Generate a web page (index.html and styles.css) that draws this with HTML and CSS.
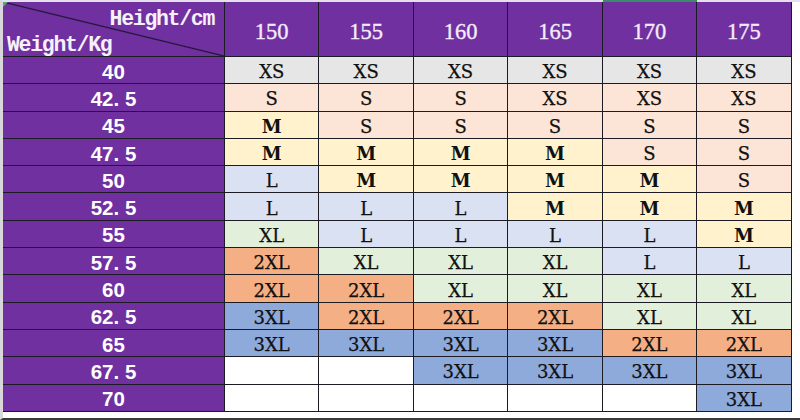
FILE: index.html
```html
<!DOCTYPE html>
<html lang="en">
<head>
<meta charset="utf-8">
<title>Size chart</title>
<link rel="stylesheet" href="styles.css">
</head>
<body>
<div class="sheet">
  <div class="sel-mark"></div>
  <div class="grid">
    <div class="corner">
      <span class="corner-h">Height/cm</span>
      <span class="corner-w">Weight/Kg</span>
      <span class="corner-tick"></span>
    </div>
    <div class="hd">150</div><div class="hd">155</div><div class="hd">160</div><div class="hd">165</div><div class="hd">170</div><div class="hd">175</div>

    <div class="wt">40</div>
    <div class="c xs">XS</div><div class="c xs">XS</div><div class="c xs">XS</div><div class="c xs">XS</div><div class="c xs">XS</div><div class="c xs">XS</div>

    <div class="wt">42<span class="pt">.</span>5</div>
    <div class="c s">S</div><div class="c s">S</div><div class="c s">S</div><div class="c s">XS</div><div class="c s">XS</div><div class="c s">XS</div>

    <div class="wt">45</div>
    <div class="c m">M</div><div class="c s">S</div><div class="c s">S</div><div class="c s">S</div><div class="c s">S</div><div class="c s">S</div>

    <div class="wt">47<span class="pt">.</span>5</div>
    <div class="c m">M</div><div class="c m">M</div><div class="c m">M</div><div class="c m">M</div><div class="c s">S</div><div class="c s">S</div>

    <div class="wt">50</div>
    <div class="c l">L</div><div class="c m">M</div><div class="c m">M</div><div class="c m">M</div><div class="c m">M</div><div class="c s">S</div>

    <div class="wt">52<span class="pt">.</span>5</div>
    <div class="c l">L</div><div class="c l">L</div><div class="c l">L</div><div class="c m">M</div><div class="c m">M</div><div class="c m">M</div>

    <div class="wt">55</div>
    <div class="c xl">XL</div><div class="c l">L</div><div class="c l">L</div><div class="c l">L</div><div class="c l">L</div><div class="c m">M</div>

    <div class="wt">57<span class="pt">.</span>5</div>
    <div class="c x2">2XL</div><div class="c xl">XL</div><div class="c xl">XL</div><div class="c xl">XL</div><div class="c l">L</div><div class="c l">L</div>

    <div class="wt">60</div>
    <div class="c x2">2XL</div><div class="c x2">2XL</div><div class="c xl">XL</div><div class="c xl">XL</div><div class="c xl">XL</div><div class="c xl">XL</div>

    <div class="wt">62<span class="pt">.</span>5</div>
    <div class="c x3">3XL</div><div class="c x2">2XL</div><div class="c x2">2XL</div><div class="c x2">2XL</div><div class="c xl">XL</div><div class="c xl">XL</div>

    <div class="wt">65</div>
    <div class="c x3">3XL</div><div class="c x3">3XL</div><div class="c x3">3XL</div><div class="c x3">3XL</div><div class="c x2">2XL</div><div class="c x2">2XL</div>

    <div class="wt">67<span class="pt">.</span>5</div>
    <div class="c e"></div><div class="c e"></div><div class="c x3">3XL</div><div class="c x3">3XL</div><div class="c x3">3XL</div><div class="c x3">3XL</div>

    <div class="wt">70</div>
    <div class="c e"></div><div class="c e"></div><div class="c e"></div><div class="c e"></div><div class="c e"></div><div class="c x3">3XL</div>
  </div>
</div>
</body>
</html>
```

FILE: styles.css
```css
html, body {
  margin: 0;
  padding: 0;
  background: #ffffff;
}

.sheet {
  position: relative;
  width: 800px;
  height: 420px;
  box-sizing: border-box;
  border-top: 2px solid #e6e0ee;
  border-left: 3px solid #d9d6dc;
  border-bottom: 2px solid #3a3a3a;
  background: #ffffff;
}

.sel-mark {
  position: absolute;
  top: -2px;
  left: 600px;
  width: 94px;
  height: 2px;
  background: #3b8a6c;
}

.grid {
  display: grid;
  grid-template-columns: 221px repeat(6, 93.45px);
  grid-template-rows: 54px repeat(13, 26.3px);
  gap: 1px;
  width: max-content;
  background: #1c1a22;
  border-right: 1px solid #1c1a22;
  border-bottom: 1px solid #1c1a22;
}

.corner {
  position: relative;
  display: flex;
  flex-direction: column;
  gap: 5px;
  padding: 7px 10px 0 4px;
  box-sizing: border-box;
  background: linear-gradient(to top right, #7030a0 calc(50% - 1.2px), #1c1530 50%, #7030a0 calc(50% + 1.2px));
  font-family: "Liberation Mono", "DejaVu Sans Mono", monospace;
  font-weight: bold;
  font-size: 21.5px;
  letter-spacing: -1.3px;
  line-height: 21px;
  color: #f6f0fb;
  overflow: hidden;
}

.corner-h {
  align-self: flex-end;
}

.corner-w {
  align-self: flex-start;
}

.corner-tick {
  position: absolute;
  top: 0;
  left: 0;
  width: 0;
  height: 0;
  border-top: 5px solid #4caf6a;
  border-right: 5px solid transparent;
}

.hd {
  display: flex;
  align-items: center;
  justify-content: center;
  padding-top: 5px;
  box-sizing: border-box;
  background: #7030a0;
  color: #f4ecfb;
  font-family: "Liberation Serif", "DejaVu Serif", serif;
  font-size: 22.5px;
  -webkit-text-stroke: 0.35px #f4ecfb;
}

.wt {
  display: flex;
  align-items: center;
  justify-content: center;
  padding-top: 3px;
  box-sizing: border-box;
  background: #7030a0;
  color: #ffffff;
  font-family: "Liberation Sans", Arial, sans-serif;
  font-weight: bold;
  font-size: 20.5px;
}

.pt {
  margin-right: 0.278em;
}

.c {
  display: flex;
  align-items: center;
  justify-content: center;
  padding-top: 3px;
  box-sizing: border-box;
  color: #111111;
  font-family: "DejaVu Serif", "Liberation Serif", serif;
  font-size: 18px;
  -webkit-text-stroke: 0.25px #111111;
}

.xs { background: #e7e6e6; }
.s  { background: #fce4d6; }
.m  { background: #fff2cc; font-weight: bold; -webkit-text-stroke: 0; }
.l  { background: #d9e1f2; }
.xl { background: #e2efda; }
.x2 { background: #f4b084; }
.x3 { background: #8eaadb; }
.e  { background: #ffffff; }
```
